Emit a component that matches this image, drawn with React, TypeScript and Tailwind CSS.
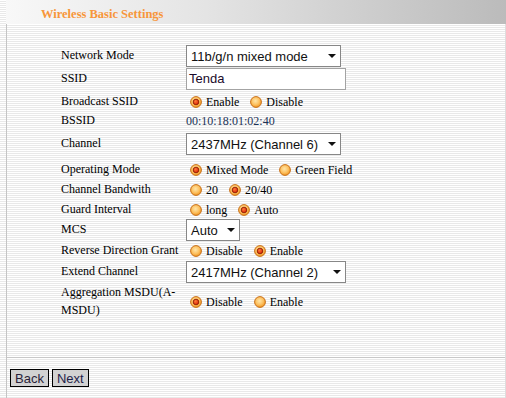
import React from "react";

const Radio = ({ checked }: { checked?: boolean }) => (
  <svg width="12" height="12" viewBox="0 0 12 12" className="shrink-0">
    <circle cx="6" cy="6" r="5.4" fill="url(#rgOrange)" stroke="#c8701a" strokeWidth="1" />
    {checked && <circle cx="6" cy="6" r="2.8" fill="url(#rgRed)" stroke="#8c1c00" strokeWidth="0.9" />}
  </svg>
);

const RadioGroup = ({ items, sel }: { items: string[]; sel: number }) => (
  <div className="flex items-center pl-[4px]">
    {items.map((t, i) => (
      <div key={t} className={`flex items-center gap-[4px] ${i > 0 ? "ml-[11px]" : ""}`}>
        <Radio checked={i === sel} />
        <span className="text-[12px] leading-none text-black">{t}</span>
      </div>
    ))}
  </div>
);

const Select = ({ value, w }: { value: string; w: string }) => (
  <div
    className={`${w} h-[22px] bg-white border border-[#878787] flex items-center justify-between pl-[4px] pr-[4px] font-['Liberation_Sans',Arial,sans-serif] text-[13px] text-[#111]`}
  >
    <span className="leading-none">{value}</span>
    <svg width="8" height="4" viewBox="0 0 8 4">
      <path d="M0 0 L8 0 L4 4 Z" fill="#111" />
    </svg>
  </div>
);

const Row = ({ label, h, children }: { label: React.ReactNode; h: string; children?: React.ReactNode }) => (
  <div className={`flex items-center ${h}`}>
    <div className="w-[125px] text-[12px] leading-[17.5px] text-black">{label}</div>
    <div className="flex items-center">{children}</div>
  </div>
);

export default function App() {
  return (
    <div className="w-[506px] h-[398px] overflow-hidden flex font-['Liberation_Serif','Times_New_Roman',serif] bg-[repeating-linear-gradient(180deg,#ffffff_0px,#ffffff_1px,#e9e9e9_1px,#e9e9e9_2px)]">
      <svg width="0" height="0" className="absolute">
        <defs>
          <radialGradient id="rgOrange" cx="0.45" cy="0.4" r="0.6">
            <stop offset="0" stopColor="#ffe6a8" />
            <stop offset="0.6" stopColor="#fcc060" />
            <stop offset="1" stopColor="#f0951e" />
          </radialGradient>
          <radialGradient id="rgRed" cx="0.4" cy="0.35" r="0.7">
            <stop offset="0" stopColor="#ff7a3a" />
            <stop offset="1" stopColor="#d81e00" />
          </radialGradient>
        </defs>
      </svg>
      <div className="w-[6px] shrink-0" />
      <div className="flex-1 flex flex-col">
        <div className="h-[24px] shrink-0 bg-[linear-gradient(90deg,#f8f8f8_0%,#e4e4e4_40%,#cfcfcf_70%,#bbbbbb_100%)] flex items-center pl-[35px]">
          <span className="text-[12.5px] font-bold text-[#f7963a] leading-none mt-[4px]">Wireless Basic Settings</span>
        </div>
        <div className="flex-1 flex flex-col border-l border-[#c4c4c4] border-r border-r-[#dedede]">
          <div className="pl-[54px] pt-[21px] flex flex-col">
            <Row label="Network Mode" h="h-[22px]">
              <Select value="11b/g/n mixed mode" w="w-[155px]" />
            </Row>
            <Row label="SSID" h="h-[23px]">
              <div className="w-[160px] h-[22px] bg-white border border-[#a3a3a3] flex items-center pl-[2px] font-['Liberation_Sans',Arial,sans-serif] text-[13px] text-[#1a0a2a]">
                Tenda
              </div>
            </Row>
            <Row label="Broadcast SSID" h="h-[24px]">
              <RadioGroup items={["Enable", "Disable"]} sel={0} />
            </Row>
            <Row label="BSSID" h="h-[13px]">
              <span className="text-[12px] leading-none text-[#1c3358]">00:10:18:01:02:40</span>
            </Row>
            <div className="h-[6px]" />
            <Row label="Channel" h="h-[22px]">
              <Select value="2437MHz (Channel 6)" w="w-[155px]" />
            </Row>
            <div className="h-[5px]" />
            <Row label="Operating Mode" h="h-[20px]">
              <RadioGroup items={["Mixed Mode", "Green Field"]} sel={0} />
            </Row>
            <Row label="Channel Bandwith" h="h-[20px]">
              <RadioGroup items={["20", "20/40"]} sel={1} />
            </Row>
            <Row label="Guard Interval" h="h-[19px]">
              <RadioGroup items={["long", "Auto"]} sel={1} />
            </Row>
            <Row label="MCS" h="h-[22px]">
              <Select value="Auto" w="w-[54px]" />
            </Row>
            <Row label="Reverse Direction Grant" h="h-[20px]">
              <RadioGroup items={["Disable", "Enable"]} sel={1} />
            </Row>
            <Row label="Extend Channel" h="h-[22px]">
              <Select value="2417MHz (Channel 2)" w="w-[160px]" />
            </Row>
            <Row
              label={
                <>
                  Aggregation MSDU(A-
                  <br />
                  MSDU)
                </>
              }
              h="h-[37px]"
            >
              <RadioGroup items={["Disable", "Enable"]} sel={0} />
            </Row>
          </div>
          <div className="mt-[37px] border-t border-[#c8c8c8]" />
          <div className="flex gap-[3px] pl-[3px] mt-[11px]">
            <button className="h-[18px] px-[4px] bg-[#d2d2d2] border border-black font-['Liberation_Sans',Arial,sans-serif] text-[13px] leading-none text-[#2a1f3a]">
              Back
            </button>
            <button className="h-[18px] px-[4px] bg-[#d2d2d2] border border-black font-['Liberation_Sans',Arial,sans-serif] text-[13px] leading-none text-[#1f1f4a]">
              Next
            </button>
          </div>
        </div>
      </div>
    </div>
  );
}
